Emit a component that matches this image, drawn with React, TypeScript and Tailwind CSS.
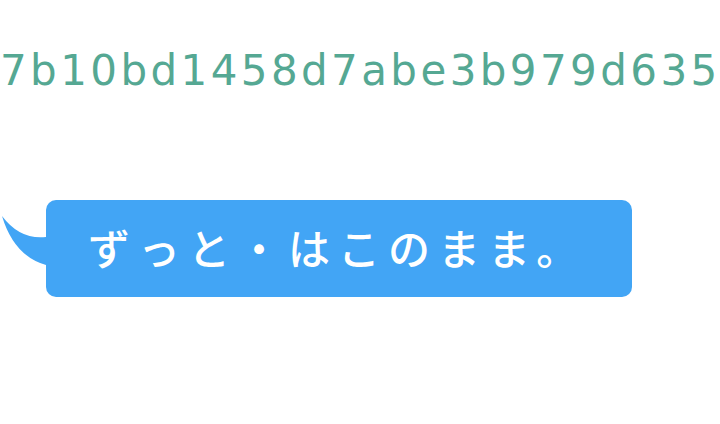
export default function App() {
  return (
    <div className="w-[720px] h-[424px] bg-white overflow-hidden">
      {/* hash line */}
      <div
        className="pt-[43px] text-[42px] leading-[56px] tracking-[3.4px] text-[#55a893] whitespace-nowrap"
        style={{ fontFamily: '"DejaVu Sans", sans-serif' }}
      >
        7b10bd1458d7abe3b979d635
      </div>

      {/* speech bubble */}
      <div className="mt-[101px] flex items-start">
        <svg width="46" height="60" viewBox="0 0 46 60" className="mt-[14px] shrink-0">
          <path d="M46 23 Q 20 26 2 2 Q 14 42 46 51 Z" fill="#42a5f5" />
        </svg>
        <div
          className="w-[586px] h-[97px] rounded-[10px] bg-[#42a5f5] pl-[42px] pb-[4px] flex items-center text-white text-[42px] font-medium tracking-[8px] whitespace-nowrap"
          style={{ fontFamily: '"Noto Sans CJK JP", sans-serif' }}
        >
          ずっと・はこのまま。
        </div>
      </div>
    </div>
  )
}
